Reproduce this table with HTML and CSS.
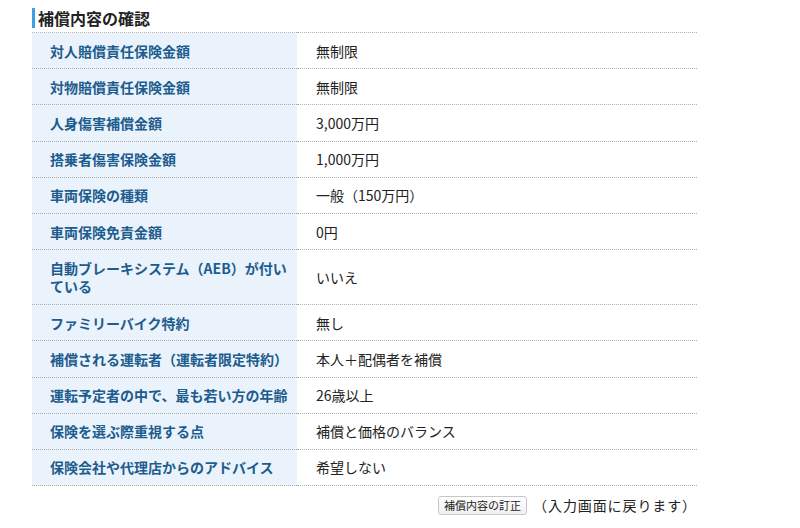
FILE: index.html
```html
<!DOCTYPE html>
<html lang="ja">
<head>
<meta charset="utf-8">
<link rel="stylesheet" href="styles.css">
</head>
<body>
<div class="wrap">
  <h2 class="title">補償内容の確認</h2>
  <table class="tbl">
    <colgroup><col class="c1"><col class="c2"></colgroup>
    <tr><th>対人賠償責任保険金額</th><td>無制限</td></tr>
    <tr><th>対物賠償責任保険金額</th><td>無制限</td></tr>
    <tr><th>人身傷害補償金額</th><td>3,000万円</td></tr>
    <tr><th>搭乗者傷害保険金額</th><td>1,000万円</td></tr>
    <tr><th>車両保険の種類</th><td>一般（150万円）</td></tr>
    <tr><th>車両保険免責金額</th><td>0円</td></tr>
    <tr class="tall"><th>自動ブレーキシステム（AEB）が付いている</th><td>いいえ</td></tr>
    <tr><th>ファミリーバイク特約</th><td>無し</td></tr>
    <tr><th>補償される運転者（運転者限定特約）</th><td>本人＋配偶者を補償</td></tr>
    <tr><th>運転予定者の中で、最も若い方の年齢</th><td>26歳以上</td></tr>
    <tr><th>保険を選ぶ際重視する点</th><td>補償と価格のバランス</td></tr>
    <tr><th>保険会社や代理店からのアドバイス</th><td>希望しない</td></tr>
  </table>
  <div class="actions">
    <button class="btn" type="button">補償内容の訂正</button>
    <span class="note">（入力画面に戻ります）</span>
  </div>
</div>
</body>
</html>
```

FILE: styles.css
```css
html, body {
  margin: 0;
  padding: 0;
  background: #fff;
}
body {
  font-family: "Noto Sans CJK JP", "Liberation Serif", serif;
  color: #222;
}
.wrap {
  width: 665px;
  margin-left: 32px;
  padding-top: 8px;
}
.title {
  margin: 0;
  font-size: 16px;
  line-height: 20px;
  font-weight: bold;
  color: #222;
  border-left: 3px solid #3aa0e8;
  padding-left: 3px;
  height: 20px;
  margin-bottom: 4px;
}
.tbl {
  width: 665px;
  table-layout: fixed;
  border-collapse: collapse;
  border-top: 1px dotted #b0b0b0;
}
.c1 { width: 265px; }
.c2 { width: 400px; }
.tbl tr {
  border-bottom: 1px dotted #b0b0b0;
}
.tbl th {
  background: #eaf3fb;
  color: #1d5c8e;
  font-size: 14px;
  font-weight: bold;
  text-align: left;
  padding: 0 4px 0 18px;
  height: 35.2px;
  line-height: 18px;
  vertical-align: middle;
}
.tbl tr.tall th {
  height: 54px;
}
.tbl td {
  font-size: 14px;
  color: #222;
  padding: 0 0 0 19px;
  vertical-align: middle;
  line-height: 18px;
}
.actions {
  display: flex;
  justify-content: flex-end;
  align-items: center;
  gap: 6px;
  padding-right: 0;
  margin-top: 9px;
}
.btn {
  font-family: "Noto Sans CJK JP", sans-serif;
  font-size: 11px;
  line-height: 14px;
  color: #222;
  background: linear-gradient(#fff, #f0f0f0);
  border: 1px solid #c8c8c8;
  border-radius: 3px;
  padding: 1px 5px;
  height: 19px;
}
.note {
  font-size: 14px;
  color: #222;
  letter-spacing: 0.9px;
}
```
